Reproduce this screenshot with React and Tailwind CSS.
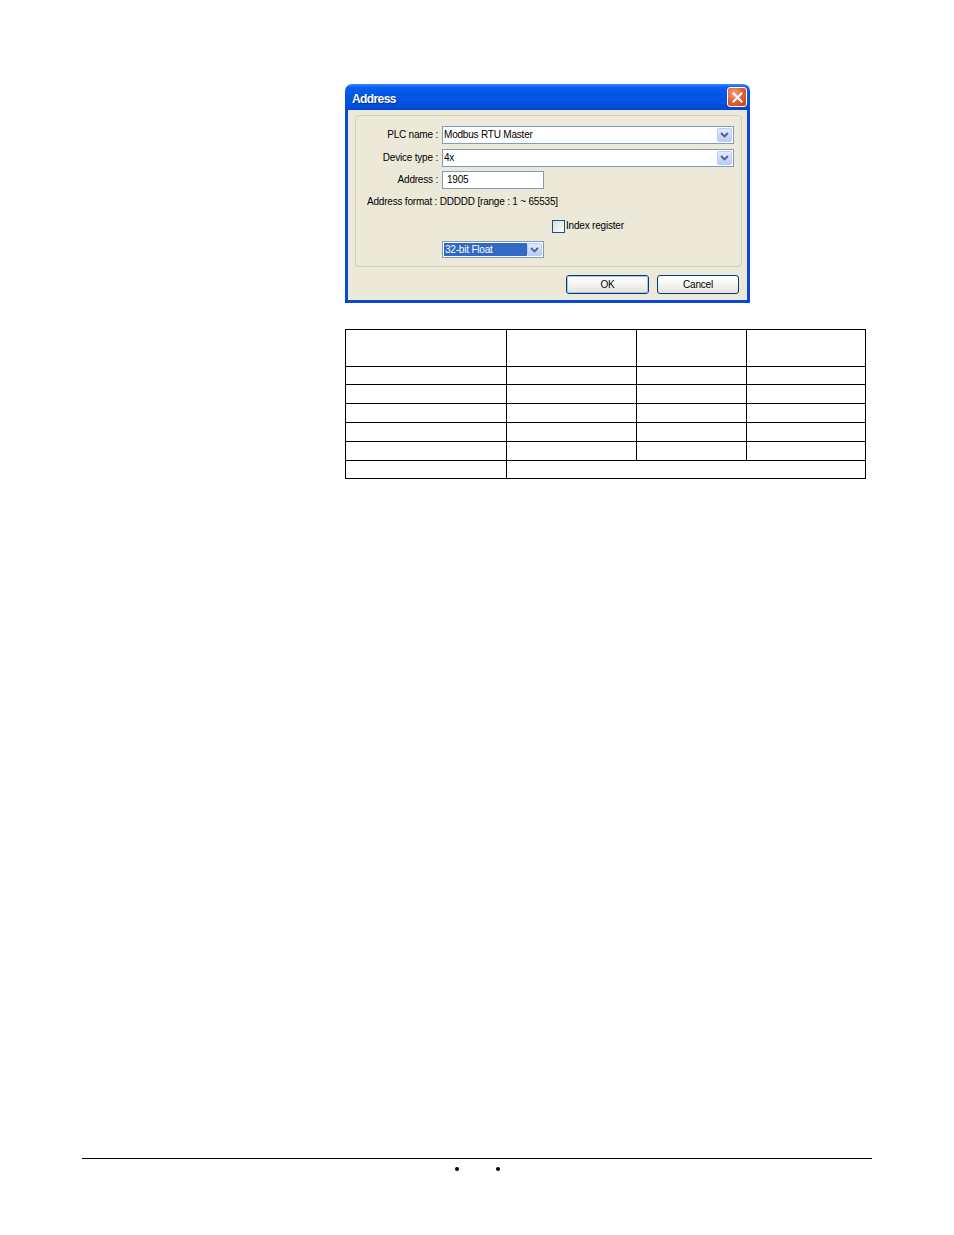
import React from "react";

const font = { fontFamily: '"Liberation Sans", Arial, sans-serif' };

function Chevron() {
  return (
    <svg width="9" height="6" viewBox="0 0 9 6">
      <path d="M1 1 L4.5 4.5 L8 1" fill="none" stroke="#4D6185" strokeWidth="1.8" />
    </svg>
  );
}

function DropBtn() {
  return (
    <div className="w-[15px] h-[14px] mr-[1px] rounded-[2px] border border-[#B9CCF5] bg-gradient-to-b from-[#E3ECFE] to-[#B7CCF8] flex items-center justify-center">
      <Chevron />
    </div>
  );
}

function Combo({ value }) {
  return (
    <div className="h-[18px] border border-[#7F9DB9] bg-white flex items-center">
      <span className="flex-1 pl-[1px] text-[10px] tracking-[-0.2px] leading-none text-black">{value}</span>
      <DropBtn />
    </div>
  );
}

function Label({ children }) {
  return (
    <div className="w-[86px] pr-[4px] text-right text-[10px] tracking-[-0.2px] leading-none text-black">{children}</div>
  );
}

function XPButton({ children, focused }) {
  return (
    <div className="h-[19px] rounded-[3px] border border-[#003C74] bg-gradient-to-b from-[#FFFFFF] via-[#F4F4F0] to-[#E3E2DA] flex items-center justify-center text-[10px] tracking-[-0.2px] leading-none text-black"
      style={{ width: focused ? 83 : 82 }}>
      <div className={focused ? "w-full h-full rounded-[2px] border border-[#A6C2F0] flex items-center justify-center" : "w-full h-full flex items-center justify-center"}>
        {children}
      </div>
    </div>
  );
}

export default function App() {
  const rows = [18, 19, 19, 19, 19];
  return (
    <div className="w-[954px] h-[1235px] bg-white flex flex-col" style={font}>
      <div className="pl-[345px] pt-[84px] flex flex-col">
        {/* Dialog */}
        <div className="w-[405px] flex flex-col">
          <div className="h-[26px] rounded-t-[7px] bg-[linear-gradient(to_bottom,#3C8FFF_0%,#0A5FEF_12%,#0056E5_40%,#0054E2_70%,#0046D0_100%)] flex items-center justify-between pl-[7px] pr-[3px]">
            <span className="pt-[3px] text-white text-[12px] font-bold leading-none tracking-[-0.6px] [text-shadow:1px_1px_0_#0A2A90]">Address</span>
            <div className="w-[20px] h-[20px] rounded-[3px] border border-white bg-[radial-gradient(circle_at_35%_30%,#F4A88A_0%,#E3623A_45%,#C7401A_100%)] flex items-center justify-center">
              <svg width="11" height="11" viewBox="0 0 11 11">
                <path d="M1.5 1.5 L9.5 9.5 M9.5 1.5 L1.5 9.5" stroke="white" strokeWidth="2" strokeLinecap="square" />
              </svg>
            </div>
          </div>
          <div className="border-x-[3px] border-b-[3px] border-[#0A48D8] bg-[#ECE9D8] flex flex-col">
            <div className="mt-[5px] ml-[7px] mr-[5px] rounded-[4px] border border-[#D0D0BF] pt-[10px] pb-[8px] flex flex-col">
              <div className="flex items-center">
                <Label>PLC name :</Label>
                <div className="w-[292px]"><Combo value="Modbus RTU Master" /></div>
              </div>
              <div className="flex items-center mt-[5px]">
                <Label>Device type :</Label>
                <div className="w-[292px]"><Combo value="4x" /></div>
              </div>
              <div className="flex items-center mt-[4px]">
                <Label>Address :</Label>
                <div className="w-[102px] h-[18px] border border-[#7F9DB9] bg-white flex items-center pl-[4px] text-[10px] tracking-[-0.2px] leading-none text-black">1905</div>
              </div>
              <div className="mt-[6px] h-[14px] flex items-center pl-[11px] text-[10px] tracking-[-0.2px] leading-none text-black">
                Address format : DDDDD [range : 1 ~ 65535]
              </div>
              <div className="mt-[11px] h-[12px] flex items-center pl-[196px]">
                <div className="w-[13px] h-[13px] border border-[#1C5180] bg-gradient-to-br from-[#DCDCD7] to-[#FFFFFF]" />
                <span className="ml-[1px] text-[10px] tracking-[-0.2px] leading-none text-black">Index register</span>
              </div>
              <div className="mt-[9px] pl-[86px] flex">
                <div className="w-[102px] h-[17px] border border-[#7F9DB9] bg-white flex items-center">
                  <div className="ml-[1px] w-[84px] h-[13px] bg-[#316AC5] text-white text-[10px] tracking-[-0.2px] leading-none flex items-center pl-[1px]">32-bit Float</div>
                  <div className="flex-1" />
                  <div className="w-[15px] h-[13px] mr-[1px] rounded-[2px] border border-[#B9CCF5] bg-gradient-to-b from-[#E3ECFE] to-[#B7CCF8] flex items-center justify-center">
                    <Chevron />
                  </div>
                </div>
              </div>
            </div>
            <div className="mt-[8px] pb-[6px] pr-[8px] flex justify-end gap-[8px]">
              <XPButton focused>OK</XPButton>
              <XPButton>Cancel</XPButton>
            </div>
          </div>
        </div>

        {/* Table */}
        <table className="mt-[26px] border-collapse w-[521px]">
          <colgroup>
            <col className="w-[161px]" />
            <col className="w-[131px]" />
            <col className="w-[110px]" />
            <col className="w-[119px]" />
          </colgroup>
          <tbody>
            <tr className="h-[37px]">
              <td className="border border-black p-0"></td>
              <td className="border border-black p-0"></td>
              <td className="border border-black p-0"></td>
              <td className="border border-black p-0"></td>
            </tr>
            {rows.map((h, i) => (
              <tr key={i} style={{ height: h }}>
                <td className="border border-black p-0"></td>
                <td className="border border-black p-0"></td>
                <td className="border border-black p-0"></td>
                <td className="border border-black p-0"></td>
              </tr>
            ))}
            <tr className="h-[18px]">
              <td className="border border-black p-0"></td>
              <td className="border border-black p-0" colSpan={3}></td>
            </tr>
          </tbody>
        </table>
      </div>

      {/* Footer */}
      <div className="mt-auto mb-[64px] pl-[82px] flex flex-col">
        <div className="w-[790px] h-[1px] bg-black" />
        <div className="mt-[8px] h-[4px] flex pl-[373px] gap-[37px]">
          <div className="w-[4px] h-[4px] rounded-full bg-black" />
          <div className="w-[4px] h-[4px] rounded-full bg-black" />
        </div>
      </div>
    </div>
  );
}
